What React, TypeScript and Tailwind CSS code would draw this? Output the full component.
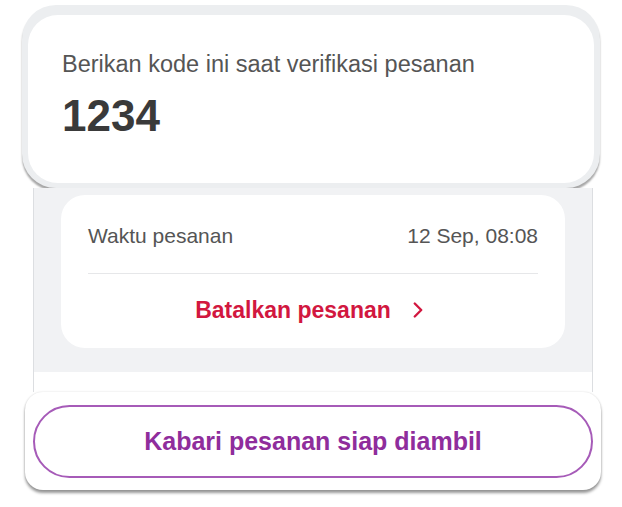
import { ChevronRight } from "lucide-react";

const font = { fontFamily: '"Liberation Sans", Arial, sans-serif' };

function CodeCard() {
  return (
    <div className="mx-[22px] mt-[5px] rounded-[34px] bg-[#eceef0] px-[6px] pb-[5px] pt-[10px] shadow-[0_3px_2px_rgba(0,0,0,0.35)]">
      <div className="h-[168px] rounded-[30px] bg-white px-[34px] pt-[35px]">
        <div className="text-[23.5px] leading-[28px] text-[#555555]">
          Berikan kode ini saat verifikasi pesanan
        </div>
        <div className="mt-[15px] text-[44px] font-bold leading-[46px] text-[#3a3a3a]">
          1234
        </div>
      </div>
    </div>
  );
}

function OrderPanel() {
  return (
    <div className="ml-[33px] mr-[29px] border-x border-[#dcdee1] bg-[#f1f2f4] px-[27px] pb-[24px] pt-[7px]">
      <div className="rounded-[24px] bg-white px-[27px]">
        <div className="flex h-[79px] items-center justify-between border-b border-[#e6e7e9] pt-[4px] text-[21px] text-[#555555]">
          <span>Waktu pesanan</span>
          <span>12 Sep, 08:08</span>
        </div>
        <button className="flex h-[74px] w-full items-center justify-center gap-[14px] pb-[2px] text-[23px] font-bold text-[#d2173f]">
          Batalkan pesanan
          <ChevronRight className="h-[26px] w-[26px]" strokeWidth={2.2} />
        </button>
      </div>
    </div>
  );
}

export default function App() {
  return (
    <div className="relative h-[507px] w-full overflow-hidden bg-white" style={font}>
      <CodeCard />
      <OrderPanel />
      <div className="ml-[33px] mr-[29px] h-[20px] border-x border-[#dcdee1] bg-white" />
      <div className="relative ml-[25px] mr-[21px] rounded-[18px] bg-white px-[8px] pb-[12px] pt-[13px] shadow-[0_3px_3px_rgba(0,0,0,0.4),0_0_2px_rgba(0,0,0,0.15)]">
        <button className="flex h-[73px] w-full items-center justify-center rounded-full border-2 border-[#a65bb8] text-[25px] font-bold text-[#8f2d9c]">
          Kabari pesanan siap diambil
        </button>
      </div>
    </div>
  );
}
